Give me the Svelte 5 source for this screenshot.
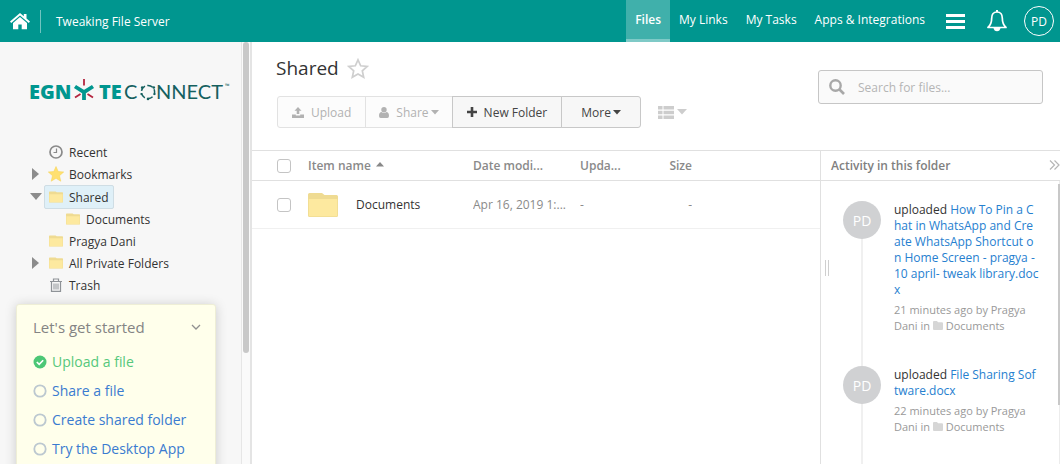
<script lang="ts">
  type Activity = { file: string; when: string; by: string; folder: string }

  let query = $state('')
  let gettingStartedOpen = $state(true)
  let allChecked = $state(false)

  const navLinks = [
    { label: 'Files', active: true },
    { label: 'My Links', active: false },
    { label: 'My Tasks', active: false },
    { label: 'Apps & Integrations', active: false },
  ]

  const tree = [
    { label: 'Recent', icon: 'clock', caret: '' },
    { label: 'Bookmarks', icon: 'star', caret: 'right' },
    { label: 'Shared', icon: 'folder', caret: 'down', selected: true },
    { label: 'Documents', icon: 'folder', caret: '', nested: true },
    { label: 'Pragya Dani', icon: 'folder', caret: '' },
    { label: 'All Private Folders', icon: 'folder', caret: 'right' },
    { label: 'Trash', icon: 'trash', caret: '' },
  ]

  const steps = [
    { label: 'Upload a file', done: true },
    { label: 'Share a file', done: false },
    { label: 'Create shared folder', done: false },
    { label: 'Try the Desktop App', done: false },
  ]

  const activities: Activity[] = [
    {
      file: 'How To Pin a Chat in WhatsApp and Create WhatsApp Shortcut on Home Screen - pragya - 10 april- tweak library.docx',
      when: '21 minutes ago',
      by: 'Pragya Dani',
      folder: 'Documents',
    },
    { file: 'File Sharing Software.docx', when: '22 minutes ago', by: 'Pragya Dani', folder: 'Documents' },
  ]
</script>

{#snippet folder(size)}
  <svg class="folder" class:large={size === 'large'} viewBox="0 0 30 24">
    <path d="M0 1.5Q0 0 1.5 0H14l2.500 2H28.500Q30 2 30 3.500V22.500Q30 24 28.500 24H1.500Q0 24 0 22.500Z" fill="#efdb92" />
    <path d="M.8 6H29.200V22.500Q29.200 23.200 28.500 23.200H1.500Q.8 23.200 .8 22.500Z" fill="#fde99f" />
  </svg>
{/snippet}

{#snippet caretDown()}
  <svg width="8" height="5" viewBox="0 0 8 5"><path d="M0 0h8L4 4.500z" fill="currentColor" /></svg>
{/snippet}

<div class="app">
  <header class="topbar">
    <a class="home" href="#home" aria-label="Home">
      <svg width="20" height="17" viewBox="0 0 20 17" fill="#fff">
        <path d="M10 0 0 8.600l1.200 1.400L10 2.600l8.800 7.400L20 8.600l-3.500-3V1h-2.700v2.200z" />
        <path d="M10 4 3 10v6.200h5.300v-4.700h3.400v4.700H17V10z" />
      </svg>
    </a>
    <span class="server">Tweaking File Server</span>
    <nav>
      {#each navLinks as link}
        <a href="#nav" class:active={link.active}>{link.label}</a>
      {/each}
    </nav>
    <button class="menu" aria-label="Menu">
      <svg width="19" height="15" viewBox="0 0 19 15"><path d="M0 0h19v3H0zM0 6h19v3H0zM0 12h19v3H0z" fill="#fff" /></svg>
    </button>
    <button class="bell" aria-label="Notifications">
      <svg width="20" height="22" viewBox="0 0 20 22" fill="none" stroke="#fff">
        <path d="M10 2C6.300 2 4.700 4.800 4.700 8c0 5-1.200 7.200-3.700 9.500h18C16.500 15.200 15.300 13 15.300 8c0-3.200-1.600-6-5.300-6z" stroke-width="1.700" stroke-linejoin="round" />
        <path d="M10 0v2" stroke-width="2" />
        <path d="M6.500 18h7c-.3 2-1.600 3.300-3.500 3.300S6.800 20 6.500 18z" fill="#fff" stroke="none" />
      </svg>
    </button>
    <button class="user">PD</button>
  </header>

  <div class="body">
    <aside class="sidebar">
      <div class="sidebar-content">
        <svg class="logo" width="202" height="26" viewBox="0 0 202 26" role="img" aria-label="Egnyte Connect">
          <text x="0" y="22" class="bold">EGN</text>
          <path d="M46 9.500 55 15.200 64 9.500M55 14.500v8.500" stroke="#00968f" stroke-width="3.800" fill="none" />
          <path d="M55 2v6.500M46 20.500l5.500-3.500M64 20.500l-5.500-3.500" stroke="#b3253f" stroke-width="1.800" fill="none" />
          <text x="70" y="22" class="bold">TE</text>
          <text x="95" y="22" class="thin">C</text>
          <circle cx="119" cy="15" r="6.600" fill="none" stroke="#15605f" stroke-width="1.500" stroke-dasharray="5.900 2.390" stroke-dashoffset="3" />
          <g fill="#15605f">
            <circle cx="119" cy="22" r="1.300" />
            <circle cx="113.200" cy="10.500" r="1.300" />
            <circle cx="124.800" cy="10.500" r="1.300" />
            <circle cx="125.600" cy="17" r="1.100" />
            <circle cx="112.400" cy="17" r="1.100" />
          </g>
          <text x="127" y="22" class="thin">NNECT</text>
          <text x="196" y="11" class="tm">™</text>
        </svg>

        <ul class="tree">
          {#each tree as node}
            <li class:nested={node.nested}>
              <span class="toggle">
                {#if node.caret === 'right'}
                  <svg width="10" height="12" viewBox="0 0 10 12"><path d="M2 0v12l7-6z" fill="#8c8c8c" /></svg>
                {:else if node.caret === 'down'}
                  <svg width="12" height="8" viewBox="0 0 12 8"><path d="M0 0h12L6 7z" fill="#8c8c8c" /></svg>
                {/if}
              </span>
              <a href="#folder" class:selected={node.selected}>
                {#if node.icon === 'folder'}
                  {@render folder('small')}
                {:else if node.icon === 'clock'}
                  <svg width="14" height="14" viewBox="0 0 14 14" fill="none" stroke="#8a8a8a">
                    <circle cx="7" cy="7" r="6" stroke-width="1.700" />
                    <path d="M7.500 3.500v4H4.500" stroke-width="1.200" />
                  </svg>
                {:else if node.icon === 'star'}
                  <svg class="star" width="16" height="16" viewBox="0 0 16 16">
                    <path d="m8 .5 2.200 5 5.500.5-4.200 3.700 1.300 5.500L8 12.300l-4.800 2.900 1.300-5.500L.3 6l5.500-.5z" fill="#ffe070" stroke="#f7d250" stroke-width=".5" />
                  </svg>
                {:else}
                  <svg width="14" height="14" viewBox="0 0 14 14" fill="none" stroke="#8f9398">
                    <path d="M1 3.500h12M4.500 3V1h5v2" stroke-width="1.200" />
                    <path d="M2.500 3.500v9.900h9V3.500" stroke-width="1.200" />
                    <path d="M5 5.500v6M7 5.500v6M9 5.500v6" />
                  </svg>
                {/if}
                {node.label}
              </a>
            </li>
          {/each}
        </ul>

        <section class="started">
          <button class="started-head" aria-expanded={gettingStartedOpen} onclick={() => (gettingStartedOpen = !gettingStartedOpen)}>
            Let's get started
            <svg width="10" height="6" viewBox="0 0 10 6" fill="none"><path d="m1 1 4 4 4-4" stroke="#909090" stroke-width="1.300" /></svg>
          </button>
          {#if gettingStartedOpen}
            <ul>
              {#each steps as step}
                <li>
                  <a href="#step" class:done={step.done}>
                    <svg width="14" height="14" viewBox="0 0 14 14" fill="none">
                      {#if step.done}
                        <circle cx="7" cy="7" r="6.500" fill="#4cc776" />
                        <path d="m3.800 7 2.400 2.400 4-4.200" stroke="#fff" stroke-width="1.600" />
                      {:else}
                        <circle cx="7" cy="7" r="5.700" stroke="#bcc8d0" stroke-width="1.800" />
                      {/if}
                    </svg>
                    {step.label}
                  </a>
                </li>
              {/each}
            </ul>
          {/if}
        </section>
      </div>
      <div class="scroll"><div class="thumb"></div></div>
    </aside>

    <main>
      <div class="page-head">
        <div class="title-block">
          <h1>
            Shared
            <button class="favorite" aria-label="Bookmark folder">
              <svg width="22" height="21" viewBox="0 0 22 21" fill="none">
                <path d="m11 1.800 2.700 6 6.500.7-4.900 4.300 1.400 6.500L11 16l-5.700 3.300 1.400-6.500L1.800 8.500l6.500-.7z" stroke="#cfcfcf" stroke-width="1.700" />
              </svg>
            </button>
          </h1>
          <div class="toolbar">
            <div class="group">
              <button class="btn upload" disabled>
                <svg width="12" height="11" viewBox="0 0 12 11" fill="currentColor">
                  <path d="M6 0 2.500 3.700h2.200V7h2.600V3.700h2.200z" />
                  <path d="M0 7.500h3.800V8.500h4.400V7.500H12V11H0z" />
                </svg>
                Upload
              </button>
              <button class="btn share" disabled>
                <svg width="10" height="11" viewBox="0 0 10 11" fill="currentColor">
                  <circle cx="5" cy="2.700" r="2.700" />
                  <path d="M0 9C0 6 1.200 5 2.500 5 4 6.200 6 6.200 7.500 5 8.800 5 10 6 10 9q0 2-1.700 2H1.700Q0 11 0 9z" />
                </svg>
                <span>Share {@render caretDown()}</span>
              </button>
              <button class="btn new">
                <svg width="10" height="10" viewBox="0 0 10 10"><path d="M5 0v10M0 5h10" stroke="currentColor" stroke-width="2.600" /></svg>
                New Folder
              </button>
              <button class="btn more"><span>More{@render caretDown()}</span></button>
            </div>
            <button class="view" aria-label="Change view">
              <svg width="16" height="13" viewBox="0 0 16 13" fill="currentColor">
                <path d="M0 0h4.500v3.600H0zM5.500 0H16v3.600H5.500zM0 4.700h4.500v3.600H0zM5.500 4.700H16v3.600H5.500zM0 9.400h4.500V13H0zM5.500 9.400H16V13H5.500z" />
              </svg>
              <svg width="10" height="6" viewBox="0 0 10 6"><path d="M0 0h10L5 5.500z" fill="currentColor" /></svg>
            </button>
          </div>
        </div>
        <label class="search">
          <svg width="16" height="16" viewBox="0 0 16 16" fill="none" stroke="#a8a8a8">
            <circle cx="6.500" cy="6.500" r="5.200" stroke-width="2.400" />
            <path d="m10.500 10.500 4.500 4.500" stroke-width="2.600" />
          </svg>
          <input type="text" placeholder="Search for files..." aria-label="Search for files" bind:value={query} />
        </label>
      </div>

      <div class="content">
        <div class="list">
          <table>
            <thead>
              <tr>
                <th class="check"><input type="checkbox" aria-label="Select all" bind:checked={allChecked} /></th>
                <th class="name">
                  Item name
                  <svg width="8" height="5" viewBox="0 0 8 5"><path d="M0 4.500h8L4 0z" fill="#888" /></svg>
                </th>
                <th class="date">Date modi...</th>
                <th class="by">Upda...</th>
                <th class="size">Size</th>
                <th></th>
              </tr>
            </thead>
            <tbody>
              <tr>
                <td class="check"><input type="checkbox" aria-label="Select Documents" checked={allChecked} /></td>
                <td class="name"><a href="#documents">{@render folder('large')}Documents</a></td>
                <td class="date">Apr 16, 2019 1:...</td>
                <td class="by">-</td>
                <td class="size">-</td>
                <td></td>
              </tr>
            </tbody>
          </table>
        </div>

        <section class="activity">
          <h2>
            Activity in this folder
            <button aria-label="Collapse activity">
              <svg width="11" height="10" viewBox="0 0 11 10" fill="none"><path d="m1 .5 4.500 4.500L1 9.500M5.500.5 10 5 5.500 9.500" stroke="#b5b5b5" stroke-width="1.200" /></svg>
            </button>
          </h2>
          <ol>
            {#each activities as item}
              <li>
                <span class="avatar">PD</span>
                <div class="entry">
                  <p class="what">uploaded <a href="#file">{item.file}</a></p>
                  <p class="meta">
                    {item.when} by {item.by} in
                    <svg width="10" height="9" viewBox="0 0 10 9"><path d="M0 1q0-1 1-1h3l1 1.300h4q1 0 1 1V8q0 1-1 1H1q-1 0-1-1z" fill="#d6d6d6" /></svg>
                    {item.folder}
                  </p>
                </div>
              </li>
            {/each}
          </ol>
          <div class="grip"></div>
          <div class="activity-thumb"></div>
        </section>
      </div>
    </main>
  </div>
</div>

<style>
  :global(body) {
    margin: 0;
  }

  .app {
    height: 100vh;
    display: flex;
    flex-direction: column;
    overflow: hidden;
    background: #fff;
    color: #333;
    font-family: 'Open Sans', sans-serif;
    font-size: 12px;
  }

  .app :is(button, input) {
    font: inherit;
  }

  a {
    color: inherit;
    text-decoration: none;
  }

  button {
    border: none;
    padding: 0;
    background: none;
    color: inherit;
    cursor: pointer;
  }

  ul,
  ol {
    list-style: none;
    margin: 0;
    padding: 0;
  }

  svg {
    flex-shrink: 0;
  }

  .topbar {
    height: 42px;
    flex-shrink: 0;
    display: flex;
    align-items: center;
    background: #00968f;
    color: #fff;
    padding: 0 6px 0 10px;
  }

  .home {
    display: flex;
    align-items: center;
    height: 23px;
    padding-right: 10px;
    border-right: 1px solid #70c4c0;
  }

  .server {
    margin-left: 15px;
  }

  nav {
    display: flex;
    align-self: stretch;
    margin-left: auto;
    margin-right: 12px;
  }

  nav a {
    display: flex;
    align-items: center;
    padding: 0 9px;
    border-bottom: 3px solid transparent;
  }

  nav a.active {
    background: #40b0ab;
    border-color: #7fcac7;
    font-weight: 600;
  }

  .topbar button {
    display: flex;
    align-items: center;
    justify-content: center;
  }

  .menu {
    margin-right: 22px;
  }

  .bell {
    margin-right: 17px;
  }

  .user {
    box-sizing: border-box;
    width: 30px;
    height: 30px;
    border: 1px solid #fff;
    border-radius: 50%;
  }

  .app .user {
    border: 1px solid #fff;
  }

  .body {
    flex: 1;
    min-height: 0;
    display: flex;
  }

  .sidebar {
    display: flex;
    width: 250px;
    flex-shrink: 0;
    background: #f7f7f7;
    border-right: 2px solid #e4e4e4;
  }

  .sidebar-content {
    flex: 1;
    overflow: hidden;
  }

  .scroll {
    width: 8px;
    border-left: 1px solid #e6e6e6;
    background: #fafafa;
  }

  .thumb {
    width: 6px;
    height: 311px;
    margin-left: 1px;
    border-radius: 3px;
    background: #c8c8c8;
  }

  .logo {
    display: block;
    margin: 35px 0 0 29px;
  }

  .bold {
    font: 800 20px 'Open Sans', sans-serif;
    fill: #00968f;
  }

  .thin {
    font: 400 20px Lato, sans-serif;
    fill: #15605f;
  }

  .tm {
    font: 6px 'Open Sans', sans-serif;
    fill: #15605f;
  }

  .tree {
    margin: 38px 0 0 30px;
  }

  .tree li {
    display: flex;
    align-items: center;
    min-height: 22px;
  }

  .tree li.nested {
    padding-left: 17px;
  }

  .toggle {
    display: flex;
    width: 14px;
  }

  .tree a {
    display: flex;
    align-items: center;
    gap: 6px;
    height: 20px;
    padding: 0 4px;
    border: 1px solid transparent;
    border-radius: 2px;
  }

  .tree a.selected {
    height: 22px;
    margin-bottom: -1px;
    background: #dff0f8;
    border-color: #cfdde4;
  }

  .star {
    margin: 0 -1px;
  }

  .folder {
    width: 14px;
    height: 12px;
  }

  .folder.large {
    width: 30px;
    height: 24px;
  }

  .started {
    margin: 8px 25px 0 16px;
    padding: 8px 14px 20px 16px;
    background: #ffffeb;
    border: 1px solid #eeeed6;
    border-radius: 3px;
    box-shadow: 0 1px 12px rgba(0, 0, 0, 0.18);
  }

  .started-head {
    display: flex;
    align-items: center;
    justify-content: space-between;
    width: 100%;
    height: 28px;
  }

  .app .started-head {
    font-size: 15px;
    color: #848484;
  }

  .started ul {
    margin-top: 6px;
  }

  .started a {
    display: flex;
    align-items: center;
    gap: 5px;
    height: 29px;
    font-size: 14px;
    color: #3a7bd0;
  }

  .started a.done {
    color: #56c87c;
  }

  main {
    flex: 1;
    min-width: 0;
    display: flex;
    flex-direction: column;
  }

  .page-head {
    display: flex;
    justify-content: space-between;
    align-items: flex-start;
    padding: 12px 17px 22px 24px;
  }

  h1 {
    display: flex;
    align-items: center;
    gap: 8px;
    height: 28px;
    margin: 0;
    font-size: 19px;
    font-weight: 400;
  }

  .favorite {
    display: flex;
  }

  .toolbar {
    display: flex;
    align-items: center;
    margin: 14px 0 0 1px;
  }

  .group {
    display: flex;
  }

  .btn {
    display: flex;
    align-items: center;
    gap: 7px;
    height: 32px;
    padding: 0 14px;
    margin-left: -1px;
    border: 1px solid #c8c8c8;
    background: #f7f7f7;
    color: #444;
  }

  .btn:disabled {
    color: #b2b2b2;
    background: #fcfcfc;
    border-color: #e2e2e2;
    cursor: default;
  }

  .btn span {
    display: flex;
    align-items: center;
    gap: 2px;
  }

  .btn.upload {
    margin-left: 0;
    border-radius: 3px 0 0 3px;
  }

  .btn.share {
    padding: 0 13px;
  }

  .btn.more {
    padding: 0 19px;
    border-radius: 0 3px 3px 0;
  }

  .view {
    display: flex;
    align-items: center;
    gap: 3px;
    margin-left: 17px;
    color: #cdcdcd;
  }

  .search {
    box-sizing: border-box;
    display: flex;
    align-items: center;
    gap: 13px;
    width: 225px;
    height: 34px;
    margin-top: 16px;
    padding: 0 10px;
    border: 1px solid #c6c6c6;
    border-radius: 3px;
    background: #fafafa;
  }

  .search input {
    flex: 1;
    min-width: 0;
    border: none;
    padding: 0;
    outline: none;
    background: none;
  }

  .search input::placeholder {
    color: #b5b5b5;
  }

  .content {
    flex: 1;
    min-height: 0;
    display: flex;
    border-top: 1px solid #e0e0e0;
  }

  .list {
    flex: 1;
    min-width: 0;
  }

  table {
    width: 100%;
    table-layout: fixed;
    border-collapse: collapse;
    color: #8a8a8a;
  }

  th,
  td {
    padding: 0;
    text-align: left;
    overflow: hidden;
    white-space: nowrap;
    text-overflow: ellipsis;
  }

  th {
    height: 29px;
    font-weight: 600;
    border-bottom: 1px solid #e0e0e0;
  }

  td {
    height: 47px;
    border-bottom: 1px solid #f0f0f0;
  }

  .check {
    width: 31px;
    padding-left: 25px;
  }

  .check input {
    appearance: none;
    display: block;
    width: 14px;
    height: 14px;
    margin: 0;
    border: 1px solid #c4c4c4;
    border-radius: 3px;
    background: #fff;
  }

  .check input:checked {
    background: #00968f;
  }

  .name {
    width: 165px;
  }

  th.name svg {
    margin: 0 0 3px 2px;
  }

  td.name a {
    display: flex;
    align-items: center;
    gap: 18px;
    color: #333;
  }

  .date {
    width: 107px;
  }

  .by {
    width: 88px;
  }

  .size {
    width: 24px;
    text-align: right;
  }

  .activity {
    position: relative;
    display: flex;
    flex-direction: column;
    width: 239px;
    border-left: 1px solid #e0e0e0;
  }

  h2 {
    display: flex;
    align-items: center;
    justify-content: space-between;
    height: 29px;
    flex-shrink: 0;
    margin: 0;
    padding-left: 10px;
    border-bottom: 1px solid #e0e0e0;
    color: #808080;
    font-size: 12px;
    font-weight: 600;
  }

  ol {
    flex: 1;
    min-height: 0;
    overflow: hidden;
    padding-top: 20px;
    border-right: 1px solid #ececec;
  }

  ol li {
    display: flex;
    align-items: flex-start;
    gap: 13px;
    padding: 0 20px 32px 22px;
    /* timeline running through the centre of the avatars */
    background: linear-gradient(#f0f0f0, #f0f0f0) 40px 0 / 2px 100% no-repeat;
  }

  ol li:last-child {
    padding-bottom: 60px;
  }

  .avatar {
    display: flex;
    align-items: center;
    justify-content: center;
    width: 38px;
    height: 38px;
    flex-shrink: 0;
    border-radius: 50%;
    background: #d0d1d3;
    color: #fff;
    font-size: 14px;
  }

  .entry {
    padding-top: 1px;
  }

  .entry p {
    margin: 0;
    line-height: 16px;
  }

  .what {
    word-break: break-all;
  }

  .what a {
    color: #2680cf;
  }

  .entry .meta {
    margin-top: 4px;
    color: #999;
    font-size: 11px;
  }

  .grip {
    position: absolute;
    left: 4px;
    top: 109px;
    width: 2px;
    height: 16px;
    border: solid #cfcfcf;
    border-width: 0 1px;
  }

  .activity-thumb {
    position: absolute;
    right: 0;
    top: 33px;
    width: 2px;
    height: 221px;
    background: #c8c8c8;
  }
</style>
